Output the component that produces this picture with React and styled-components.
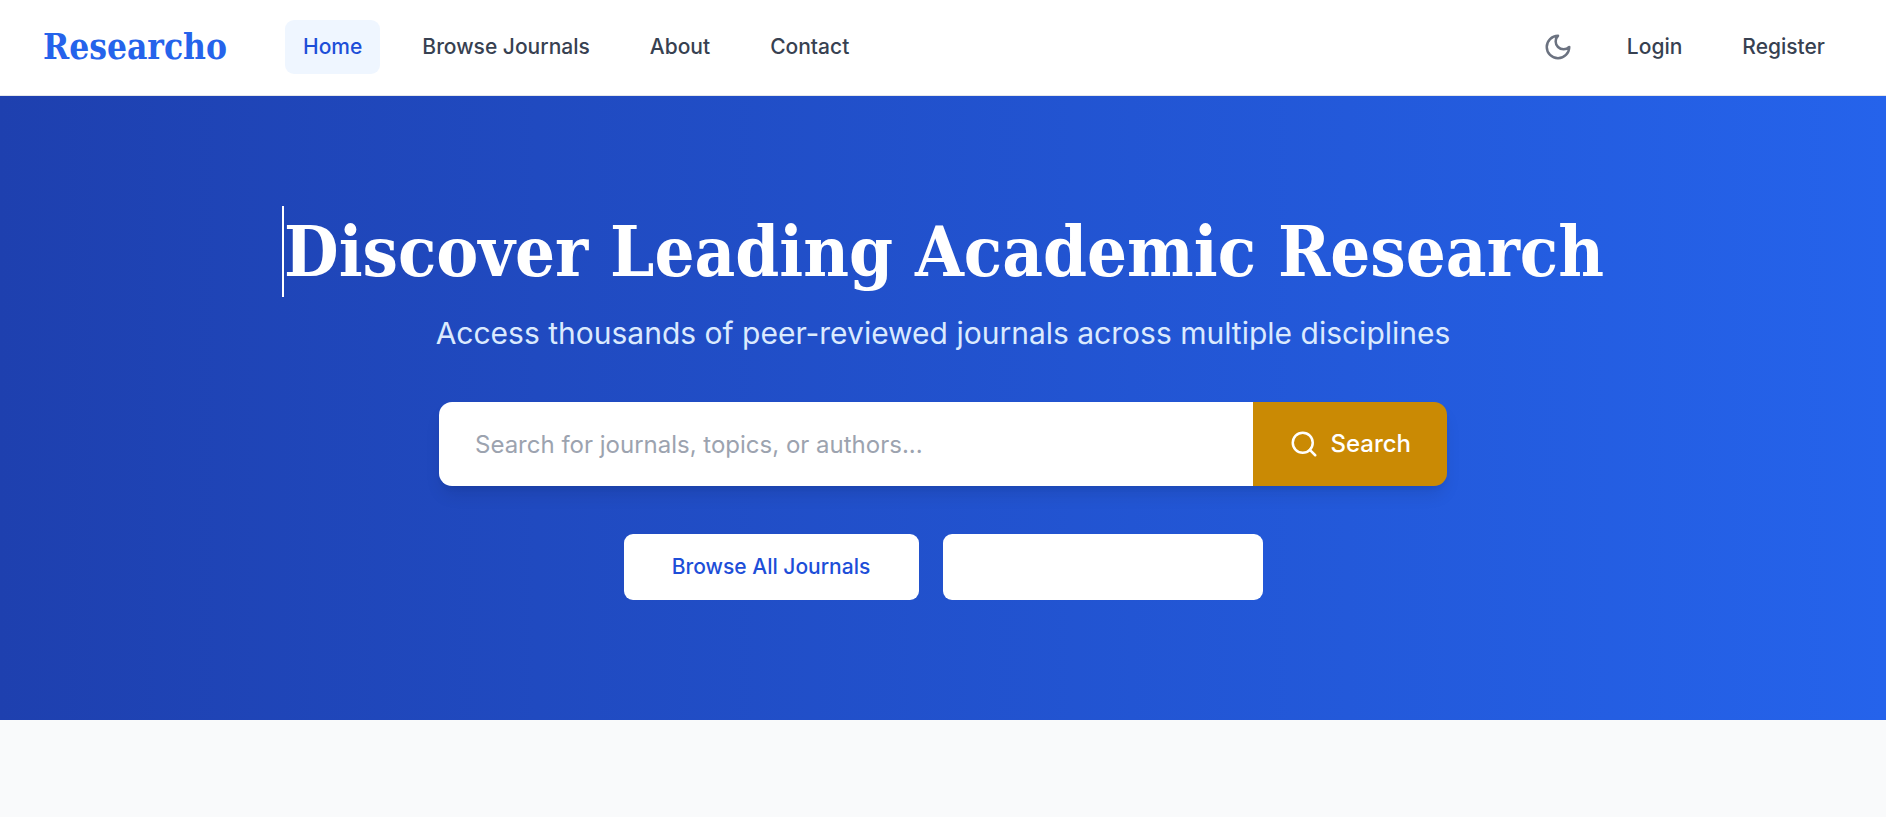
import React from "react";
import styled, { createGlobalStyle, css } from "styled-components";
import { Search } from "lucide-react";

const GlobalStyle = createGlobalStyle`
  *, *::before, *::after { box-sizing: border-box; }
  body {
    margin: 0;
    background: #f9fafb;
    color: #374151;
    font-family: Inter, "Liberation Sans", sans-serif;
    font-size: 21px;
    line-height: 28px;
  }
`;

const serif = css`
  font-family: "DejaVu Serif Condensed", "DejaVu Serif", serif;
  font-weight: 700;
`;

const Header = styled.header`
  display: flex;
  align-items: center;
  justify-content: space-between;
  padding: 20px 43px 21px;
  background: #fff;
  border-bottom: 1px solid #e5e7eb;
`;

const Group = styled.div`
  display: flex;
  align-items: center;
  gap: ${(p) => p.$gap}px;
`;

const Brand = styled.a`
  ${serif}
  color: #2563eb;
  font-size: 35px;
  line-height: 40px;
  text-decoration: none;
`;

const Nav = styled.nav`
  display: flex;
  gap: 24px;
`;

const NavLink = styled.a`
  padding: 13px 18px;
  border-radius: 9px;
  background: ${(p) => (p.$active ? "#eff6ff" : "transparent")};
  color: ${(p) => (p.$active ? "#1d4ed8" : "#374151")};
  font-weight: 500;
  text-decoration: none;
`;

const IconButton = styled.button`
  display: flex;
  padding: 12px;
  border: 0;
  background: transparent;
  color: #6b7280;
`;

const Hero = styled.section`
  display: flex;
  flex-direction: column;
  align-items: center;
  padding: 110px 36px 120px;
  background: linear-gradient(to right, #1e40af, #2563eb);
`;

const Title = styled.h1`
  ${serif}
  margin: 0;
  border-left: 2px solid #fff;
  color: #fff;
  font-size: 70px;
  line-height: 91px;
`;

const Subtitle = styled.p`
  margin: 18px 0 0;
  color: #dbeafe;
  font-size: 30px;
  line-height: 36px;
`;

const SearchForm = styled.form`
  display: flex;
  width: 100%;
  max-width: 1008px;
  margin: 51px 0 48px;
  border-radius: 13px;
  overflow: hidden;
  box-shadow: 0 11px 17px -3px rgba(0, 0, 0, 0.1), 0 4px 7px -4px rgba(0, 0, 0, 0.1);
`;

const SearchInput = styled.input`
  flex: 1;
  min-width: 0;
  height: 84px;
  padding: 0 36px;
  border: 0;
  background: #fff;
  font: inherit;
  font-size: 24px;
  &::placeholder { color: #9ca3af; opacity: 1; }
`;

const SearchButton = styled.button`
  display: flex;
  align-items: center;
  gap: 11px;
  padding: 0 36px;
  border: 0;
  background: #ca8a04;
  color: #fff;
  font: inherit;
  font-size: 24px;
  font-weight: 500;
`;

const Action = styled.a`
  min-height: 66px;
  min-width: ${(p) => p.$width}px;
  padding: 19px 24px;
  border-radius: 9px;
  background: #fff;
  color: #1d4ed8;
  font-weight: 500;
  text-align: center;
  text-decoration: none;
`;

const MoonIcon = () => (
  <svg
    width="30"
    height="30"
    viewBox="0 0 24 24"
    fill="none"
    stroke="currentColor"
    strokeWidth="2"
    strokeLinecap="round"
    strokeLinejoin="round"
    aria-hidden="true"
  >
    <path d="M12 3a6 6 0 0 0 9 9 9 9 0 1 1-9-9Z" />
  </svg>
);

export default function App() {
  return (
    <>
      <GlobalStyle />
      <Header>
        <Group $gap={58}>
          <Brand href="#">Researcho</Brand>
          <Nav>
            <NavLink href="#" $active aria-current="page">Home</NavLink>
            <NavLink href="#">Browse Journals</NavLink>
            <NavLink href="#">About</NavLink>
            <NavLink href="#">Contact</NavLink>
          </Nav>
        </Group>
        <Group $gap={24}>
          <IconButton type="button" aria-label="Toggle dark mode">
            <MoonIcon />
          </IconButton>
          <NavLink href="#">Login</NavLink>
          <NavLink href="#">Register</NavLink>
        </Group>
      </Header>
      <main>
        <Hero>
          <Title>Discover Leading Academic Research</Title>
          <Subtitle>Access thousands of peer-reviewed journals across multiple disciplines</Subtitle>
          <SearchForm>
            <SearchInput
              type="text"
              aria-label="Search journals"
              placeholder="Search for journals, topics, or authors..."
            />
            <SearchButton type="button">
              <Search size={30} strokeWidth={2} />
              Search
            </SearchButton>
          </SearchForm>
          <Group $gap={24}>
            <Action href="#" $width={295}>Browse All Journals</Action>
            <Action href="#" $width={320} aria-label="Submit your research" />
          </Group>
        </Hero>
      </main>
    </>
  );
}
